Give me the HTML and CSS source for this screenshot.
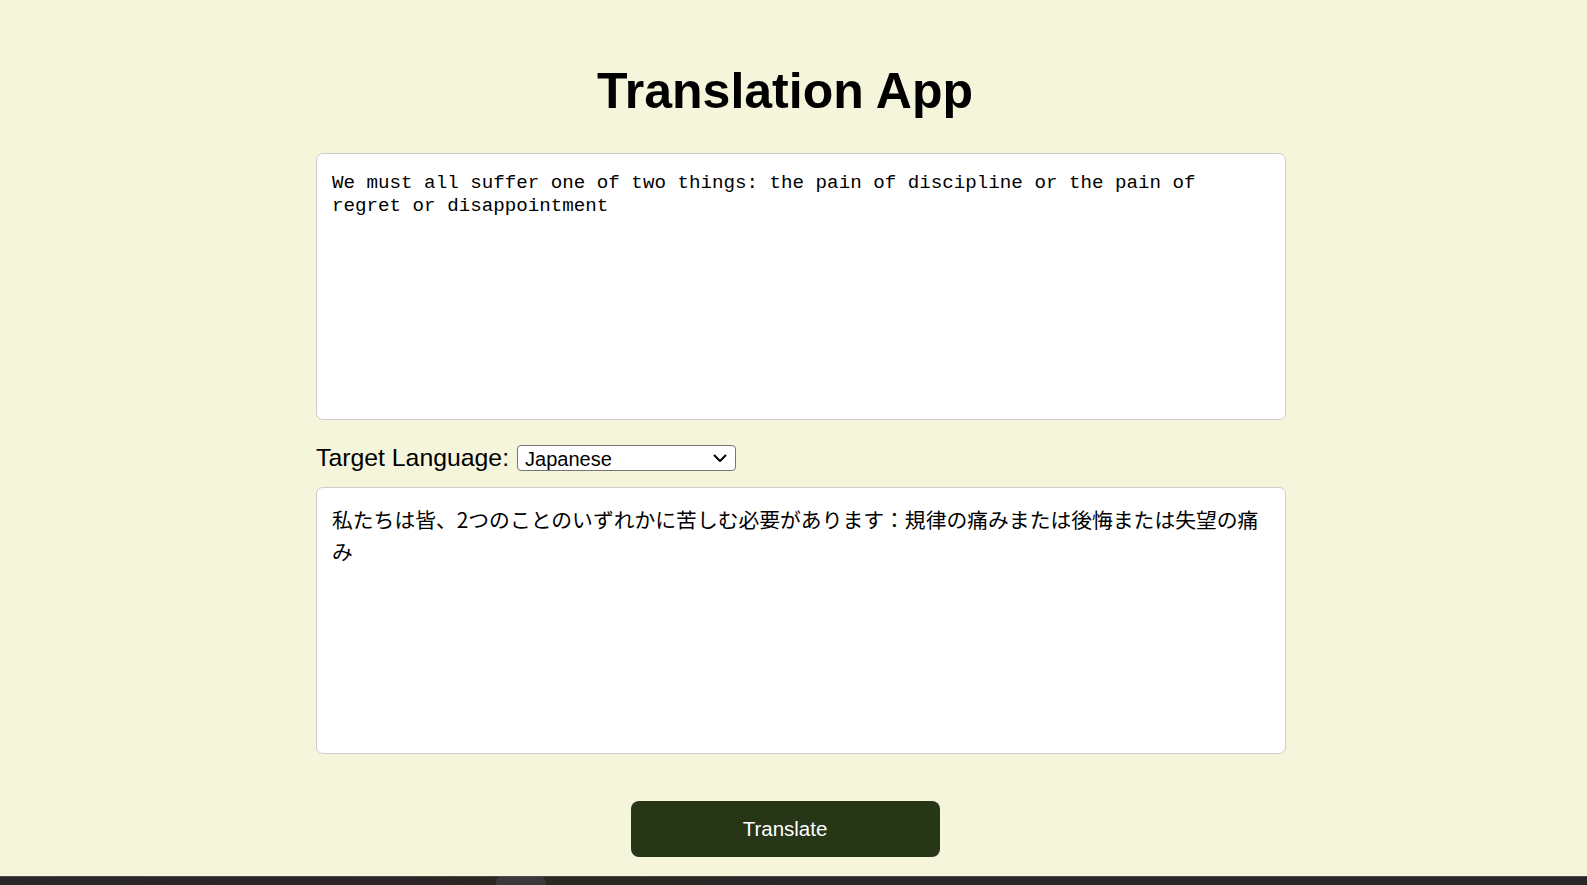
FILE: index.html
```html
<!DOCTYPE html>
<html lang="en">
<head>
<meta charset="utf-8">
<title>Translation App</title>
<link rel="stylesheet" href="styles.css">
</head>
<body>
<main class="page">
  <div class="app">
    <h1 class="title">Translation App</h1>
    <textarea class="source" spellcheck="false">We must all suffer one of two things: the pain of discipline or the pain of regret or disappointment</textarea>
    <div class="lang-row">
      <label class="lang-label" for="lang">Target Language:</label>
      <span class="select-wrap">
        <select id="lang" class="lang-select">
          <option>Japanese</option>
        </select>
        <svg class="select-arrow" width="14" height="9" viewBox="0 0 14 9" aria-hidden="true">
          <path d="M1.5 1.5 L7 7 L12.5 1.5" fill="none" stroke="#000" stroke-width="2" stroke-linecap="round" stroke-linejoin="round"/>
        </svg>
      </span>
    </div>
    <textarea class="result" lang="ja" spellcheck="false">私たちは皆、2つのことのいずれかに苦しむ必要があります：規律の痛みまたは後悔または失望の痛み</textarea>
    <div class="actions">
      <button class="translate-btn" type="button">Translate</button>
    </div>
  </div>
</main>
<footer class="taskbar"><span class="taskbar-tab"></span></footer>
</body>
</html>
```

FILE: styles.css
```css
html, body {
  margin: 0;
  height: 100%;
}

body {
  background: #f5f5dc;
  font-family: "Liberation Sans", Arial, sans-serif;
  color: #000;
  display: flex;
  flex-direction: column;
  overflow: hidden;
}

.page {
  flex: 1;
  padding-right: 17px;
}

.app {
  width: 938px;
  margin: 0 auto;
}

.title {
  margin: 62px 0 33px;
  font-size: 50px;
  line-height: 58px;
  font-weight: bold;
  text-align: center;
}

.source,
.result {
  display: block;
  width: 100%;
  box-sizing: content-box;
  margin: 0;
  background: #fff;
  border: 1px solid #cccccc;
  border-radius: 7px;
  resize: none;
  outline: none;
  color: #000;
}

.source {
  padding: 18px 15px 15px;
  height: 232px;
  font-family: "Liberation Mono", "DejaVu Sans Mono", monospace;
  font-size: 19.2px;
  line-height: 23.3px;
}

.result {
  padding: 16px 15px 14px;
  height: 235px;
  font-family: "Noto Sans CJK JP", "Noto Sans", sans-serif;
  font-size: 20.8px;
  line-height: 31.5px;
}

.lang-row {
  display: flex;
  align-items: center;
  height: 26px;
  margin: 25px 0 16px;
}

.lang-label {
  font-size: 24.8px;
  margin-right: 8px;
}

.select-wrap {
  position: relative;
  display: block;
  width: 219px;
  height: 26px;
}

.lang-select {
  display: block;
  width: 219px;
  height: 26px;
  -webkit-appearance: none;
  appearance: none;
  font-family: "Liberation Sans", Arial, sans-serif;
  font-size: 20px;
  color: #000;
  background: #fff;
  border: 1px solid #767676;
  border-radius: 4px;
  padding: 1px 7px 0;
  margin: 0;
}

.select-arrow {
  position: absolute;
  right: 9px;
  top: 9px;
  pointer-events: none;
}

.actions {
  display: flex;
  justify-content: center;
  margin-top: 47px;
}

.translate-btn {
  width: 309px;
  height: 56px;
  background: #283618;
  color: #fff;
  border: none;
  border-radius: 8px;
  font-family: "Liberation Sans", Arial, sans-serif;
  font-size: 20.5px;
  cursor: pointer;
}

.taskbar {
  height: 9px;
  flex: 0 0 9px;
  background: linear-gradient(90deg, #2a2628 0%, #2c2426 25%, #2a2820 35%, #2a2628 50%, #2a2628 100%);
  border-top: 1px solid #4a4a48;
  box-sizing: border-box;
  padding-left: 496px;
}

.taskbar-tab {
  display: block;
  width: 50px;
  height: 8px;
  background: #3a3839;
  border-radius: 5px 5px 0 0;
}
```
